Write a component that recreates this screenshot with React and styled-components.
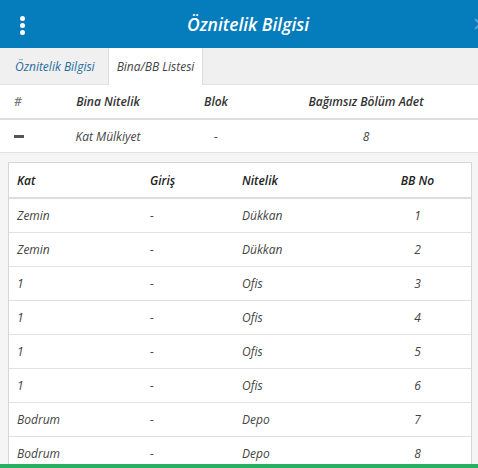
import React from 'react';
import styled, { createGlobalStyle } from 'styled-components';

const GlobalStyle = createGlobalStyle`
  *, *::before, *::after { box-sizing: border-box; }
  html, body { margin: 0; padding: 0; background: #fff; }
  body { font-family: 'Open Sans', 'Noto Sans', sans-serif; overflow: hidden; }
`;

const Panel = styled.div`
  width: 478px;
  height: 468px;
  display: flex;
  flex-direction: column;
  overflow: hidden;
  font-style: italic;
  color: #333;
`;

const Header = styled.header`
  position: relative;
  height: 48px;
  flex: none;
  background: #057cbc;
  display: flex;
  align-items: center;
  justify-content: center;
`;

const Title = styled.h1`
  margin: 0 0 0 18px;
  font-size: 17.5px;
  font-weight: 600;
  color: #fff;
`;

const MenuBtn = styled.div`
  position: absolute;
  left: 20px;
  top: 16px;
  display: flex;
  flex-direction: column;
  gap: 2px;
  span {
    width: 5px;
    height: 5px;
    border-radius: 50%;
    background: #fff;
  }
`;

const EdgeArrow = styled.svg`
  position: absolute;
  right: -4px;
  top: 18px;
`;

const Tabs = styled.nav`
  height: 37px;
  flex: none;
  background: #f0f0f0;
  display: flex;
  border-bottom: 1px solid #e4e4e4;
`;

const Tab = styled.div`
  padding: ${p => (p.$active ? '0 8px' : '0 12px 0 14px')};
  display: flex;
  align-items: center;
  font-size: 12px;
  color: ${p => (p.$active ? '#444' : '#1f6d9f')};
  background: ${p => (p.$active ? '#fff' : 'transparent')};
  border-left: 1px solid ${p => (p.$active ? '#ddd' : 'transparent')};
  border-right: 1px solid ${p => (p.$active ? '#ddd' : 'transparent')};
  margin-bottom: -1px;
`;

const OuterRow = styled.div`
  display: grid;
  grid-template-columns: 50px 116px 100px 200px 1fr;
  align-items: center;
  flex: none;
  height: ${p => (p.$head ? '35px' : '33px')};
  border-bottom: ${p => (p.$head ? '2px solid #ddd' : '1px solid #e2e2e2')};
  font-size: 12px;
  font-weight: ${p => (p.$head ? 600 : 400)};
  color: ${p => (p.$head ? '#333' : '#444')};
`;

const Cell = styled.div`
  text-align: ${p => p.$align || 'center'};
  padding-left: ${p => p.$pad || 0};
  color: ${p => p.$color || 'inherit'};
`;

const Minus = styled.div`
  width: 10px;
  height: 3px;
  background: #555;
  margin-left: 14px;
`;

const Detail = styled.div`
  flex: 1;
  background: #f5f5f5;
  padding: 9px 6px 0 8px;
`;

const InnerTable = styled.div`
  background: #fff;
  border: 1px solid #d6d6d6;
  border-bottom: none;
`;

const InnerRow = styled.div`
  display: grid;
  grid-template-columns: 133px 92px 130px 1fr;
  align-items: center;
  height: ${p => (p.$head ? '36px' : '34px')};
  border-bottom: ${p => (p.$head ? '2px solid #ddd' : '1px solid #e2e2e2')};
  font-size: 12px;
  font-weight: ${p => (p.$head ? 600 : 400)};
  color: ${p => (p.$head ? '#222' : '#444')};
`;

const InnerCell = styled.div`
  padding-left: ${p => (p.$center ? 0 : '8px')};
  text-align: ${p => (p.$center ? 'center' : 'left')};
`;

const GreenBar = styled.div`
  position: fixed;
  left: 0;
  right: 0;
  bottom: 0;
  height: 4px;
  background: #28b062;
`;

const rows = [
  ['Zemin', '-', 'Dükkan', 1],
  ['Zemin', '-', 'Dükkan', 2],
  ['1', '-', 'Ofis', 3],
  ['1', '-', 'Ofis', 4],
  ['1', '-', 'Ofis', 5],
  ['1', '-', 'Ofis', 6],
  ['Bodrum', '-', 'Depo', 7],
  ['Bodrum', '-', 'Depo', 8],
];

export default function App() {
  return (
    <>
      <GlobalStyle />
      <Panel>
        <Header>
          <MenuBtn><span /><span /><span /></MenuBtn>
          <Title>Öznitelik Bilgisi</Title>
          <EdgeArrow width="8" height="12" viewBox="0 0 8 12">
            <path d="M1 1l5 5-5 5" fill="none" stroke="#4f9fcf" strokeWidth="2" />
          </EdgeArrow>
        </Header>
        <Tabs>
          <Tab>Öznitelik Bilgisi</Tab>
          <Tab $active>Bina/BB Listesi</Tab>
        </Tabs>
        <OuterRow $head>
          <Cell $align="left" $pad="14px" $color="#777">#</Cell>
          <Cell>Bina Nitelik</Cell>
          <Cell>Blok</Cell>
          <Cell>Bağımsız Bölüm Adet</Cell>
        </OuterRow>
        <OuterRow>
          <Minus />
          <Cell>Kat Mülkiyet</Cell>
          <Cell>-</Cell>
          <Cell>8</Cell>
        </OuterRow>
        <Detail>
          <InnerTable>
            <InnerRow $head>
              <InnerCell>Kat</InnerCell>
              <InnerCell>Giriş</InnerCell>
              <InnerCell>Nitelik</InnerCell>
              <InnerCell $center>BB No</InnerCell>
            </InnerRow>
            {rows.map((r, i) => (
              <InnerRow key={i}>
                <InnerCell>{r[0]}</InnerCell>
                <InnerCell>{r[1]}</InnerCell>
                <InnerCell>{r[2]}</InnerCell>
                <InnerCell $center>{r[3]}</InnerCell>
              </InnerRow>
            ))}
          </InnerTable>
        </Detail>
        <GreenBar />
      </Panel>
    </>
  );
}
